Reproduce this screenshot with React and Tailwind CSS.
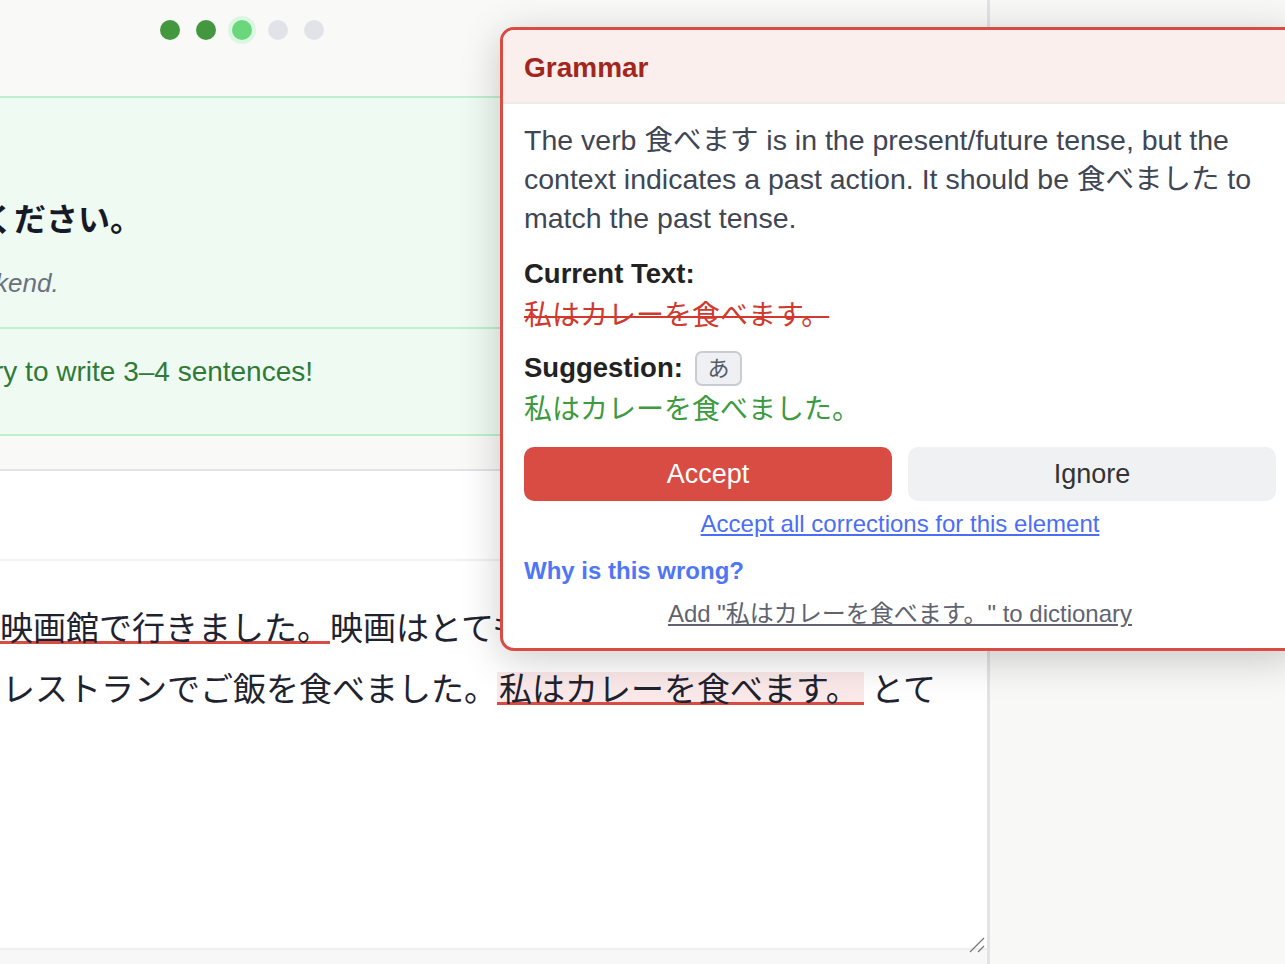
import React from "react";

const FONT = "font-['Liberation_Sans','Noto_Sans_CJK_JP',sans-serif]";
const CJK = "font-['Noto_Sans_CJK_JP','Liberation_Sans',sans-serif]";

function Dots() {
  return (
    <div className="h-[96px] pt-[20px] pl-[160px] flex gap-4 items-start">
      <div className="w-5 h-5 rounded-full bg-[#43983f]" />
      <div className="w-5 h-5 rounded-full bg-[#43983f]" />
      <div className="w-5 h-5 rounded-full bg-[#6bd77d] ring-[4px] ring-[#dcf7e1]" />
      <div className="w-5 h-5 rounded-full bg-[#e2e3e8]" />
      <div className="w-5 h-5 rounded-full bg-[#e2e3e8]" />
    </div>
  );
}

function PromptBox() {
  return (
    <section className="border-y-2 border-[#bdf0cb] bg-[#effbf2] overflow-hidden">
      <div className="h-[229px] pt-[99px]">
        <div className={`${CJK} text-[32px] leading-[40px] font-bold text-[#161a26] whitespace-nowrap -ml-[18px]`}>
          ください。
        </div>
        <div className={`${FONT} mt-[30px] text-[26px] leading-[32px] italic text-[#6b7080] whitespace-nowrap -ml-[5px]`}>
          kend.
        </div>
      </div>
      <div className="h-[107px] border-t-2 border-[#bdf0cb] pt-[27px]">
        <div className={`${FONT} text-[28px] leading-[32px] text-[#2f7a37] whitespace-nowrap -ml-[6px]`}>
          ry to write 3–4 sentences!
        </div>
      </div>
    </section>
  );
}

function Editor() {
  return (
    <div className="relative flex-1 mt-[33px] border-t-2 border-[#e2e2e8] bg-white flex flex-col">
      <div className="h-[90px] border-b-2 border-[#f1f1f1]" />
      <div className={`${CJK} flex-1 pt-[35px] text-[33px] leading-[61px] text-[#1f2330] font-normal`}>
        <div className="whitespace-nowrap -ml-[33px]">
          <span className="inline-block leading-[30px] border-b-[3px] border-[#d94c43]">に映画館で行きました。</span>
          映画はとても
        </div>
        <div className="whitespace-nowrap -ml-[31px]">
          、レストランでご飯を食べました。
          <span className="inline-block leading-[30px] bg-[#fbe9e9] border-b-[3px] border-[#d94c43] pl-[2px] pr-[5px]">私はカレーを食べます。</span>
          {" "}とて
        </div>
      </div>
      <svg className="absolute right-[2px] bottom-[11px]" width="16" height="16" viewBox="0 0 16 16">
        <line x1="1" y1="15" x2="15" y2="1" stroke="#777" strokeWidth="1.3" />
        <line x1="9" y1="15" x2="15" y2="9" stroke="#777" strokeWidth="1.3" />
      </svg>
      <div className="h-[16px] border-t-2 border-[#efefef] bg-[#f7f7f7]" />
    </div>
  );
}

function Popover() {
  return (
    <div className={`${FONT} absolute left-[500px] top-[27px] w-[800px] bg-white border-[3px] border-[#d94c43] rounded-[14px] overflow-hidden shadow-[0_8px_40px_rgba(0,0,0,0.2)]`}>
      <div className="h-[74px] bg-[#fbefee] border-b-2 border-[#ececec] px-[21px] pt-[4px] flex items-center">
        <span className="text-[28px] font-bold text-[#a3261d]">Grammar</span>
      </div>
      <div className="px-[21px] pt-[17px] pb-[19px] flex flex-col">
        <p className="text-[28.5px] leading-[39px] text-[#3f4654]">
          The verb 食べます is in the present/future tense, but the context indicates a past action. It should be 食べました to match the past tense.
        </p>
        <div className="mt-[18px] text-[27.5px] leading-[36px] font-bold text-[#222]">Current Text:</div>
        <div className="mt-[6px] text-[28px] leading-[36px] text-[#d0392e] line-through decoration-[2px]">私はカレーを食べます。</div>
        <div className="mt-[16px] flex items-center gap-[12px]">
          <span className="text-[27.5px] leading-[36px] font-bold text-[#222]">Suggestion:</span>
          <span className="w-[47px] h-[35px] rounded-[7px] border-2 border-[#c9ccd3] bg-[#eef0f3] text-[#555b66] text-[22px] flex items-center justify-center">あ</span>
        </div>
        <div className="mt-[6px] text-[28px] leading-[36px] text-[#3d9a3f]">私はカレーを食べました。</div>
        <div className="mt-[19px] grid grid-cols-2 gap-[16px]">
          <button className="h-[54px] rounded-[10px] bg-[#d94c43] text-white text-[27px]">Accept</button>
          <button className="h-[54px] rounded-[10px] bg-[#f0f1f3] text-[#333] text-[27px]">Ignore</button>
        </div>
        <div className="mt-[8px] text-center text-[24px] leading-[30px]">
          <span className="text-[#4c6ef5] underline">Accept all corrections for this element</span>
        </div>
        <div className="mt-[17px] text-[24px] leading-[30px] font-semibold text-[#4f76f6]">Why is this wrong?</div>
        <div className="mt-[13px] text-center text-[24px] leading-[30px]">
          <span className="text-[#5f6470] underline">Add "私はカレーを食べます。" to dictionary</span>
        </div>
      </div>
    </div>
  );
}

export default function App() {
  return (
    <div className={`${FONT} relative w-[1285px] h-[964px] overflow-hidden bg-[#f9f9f8]`}>
      <div className="flex h-full">
        <main className="w-[987px] shrink-0 flex flex-col overflow-hidden">
          <Dots />
          <PromptBox />
          <Editor />
        </main>
        <aside className="flex-1 border-l-[3px] border-[#e2e2e8] bg-[#f8f8f7]" />
      </div>
      <Popover />
    </div>
  );
}
